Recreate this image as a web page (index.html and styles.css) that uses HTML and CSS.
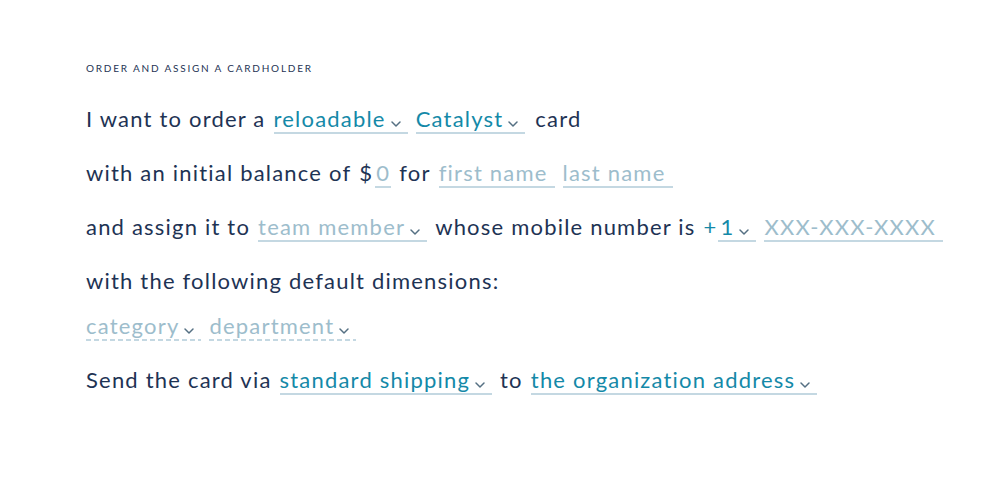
FILE: index.html
```html
<!DOCTYPE html>
<html lang="en">
<head>
<meta charset="utf-8">
<title>Order and assign a cardholder</title>
<link rel="stylesheet" href="styles.css">
</head>
<body>
<main class="form">
  <h1 class="title">ORDER AND ASSIGN A CARDHOLDER</h1>

  <div class="row">
    <span>I want to order a</span>
    <span class="field value">reloadable<svg class="chev" viewBox="0 0 10 6"><path d="M1 1l4 4 4-4"/></svg></span>
    <span class="field value">Catalyst<svg class="chev" viewBox="0 0 10 6"><path d="M1 1l4 4 4-4"/></svg></span>
    <span class="after">card</span>
  </div>

  <div class="row">
    <span>with an initial balance of</span>
    <span class="money"><span class="dollar">$</span><span class="field ph tight">0</span></span>
    <span>for</span>
    <span class="field ph">first name</span>
    <span class="field ph">last name</span>
  </div>

  <div class="row">
    <span>and assign it to</span>
    <span class="field ph">team member<svg class="chev" viewBox="0 0 10 6"><path d="M1 1l4 4 4-4"/></svg></span>
    <span>whose mobile number is</span>
    <span class="phone"><span class="plus">+</span><span class="field value code">1<svg class="chev" viewBox="0 0 10 6"><path d="M1 1l4 4 4-4"/></svg></span></span>
    <span class="field ph">XXX-XXX-XXXX</span>
  </div>

  <div class="row">
    <span>with the following default dimensions:</span>
  </div>

  <div class="row row-dims">
    <span class="field ph dashed">category<svg class="chev" viewBox="0 0 10 6"><path d="M1 1l4 4 4-4"/></svg></span>
    <span class="field ph dashed">department<svg class="chev" viewBox="0 0 10 6"><path d="M1 1l4 4 4-4"/></svg></span>
  </div>

  <div class="row">
    <span>Send the card via</span>
    <span class="field value">standard shipping<svg class="chev" viewBox="0 0 10 6"><path d="M1 1l4 4 4-4"/></svg></span>
    <span>to</span>
    <span class="field value">the organization address<svg class="chev" viewBox="0 0 10 6"><path d="M1 1l4 4 4-4"/></svg></span>
  </div>
</main>
</body>
</html>
```

FILE: styles.css
```css
* { box-sizing: border-box; }

html, body {
  margin: 0;
  padding: 0;
  background: #ffffff;
}

body {
  font-family: Lato, "Noto Sans", "Liberation Sans", sans-serif;
  color: #1e3354;
}

.form {
  padding: 60px 0 0 86px;
}

.title {
  margin: 0 0 30px;
  font-size: 10px;
  font-weight: 400;
  letter-spacing: 1.8px;
  line-height: 16px;
  color: #1e3354;
}

.row {
  display: flex;
  align-items: baseline;
  gap: 8px;
  font-size: 22px;
  letter-spacing: 1.2px;
  line-height: 26px;
  height: 54px;
}

.row-dims {
  height: 45px;
  margin-top: -9px;
  margin-bottom: 9px;
}

.field {
  display: inline-flex;
  align-items: baseline;
  line-height: 26px;
  border-bottom: 2px solid #c4d8e2;
  padding-right: 7px;
}

.field.value { color: #1489a8; }
.field.ph { color: #9dbdcc; }

.field.dashed {
  border-bottom: none;
  padding-bottom: 2px;
  background-image: linear-gradient(to right, #c4d8e2 5px, transparent 5px);
  background-size: 8px 2px;
  background-repeat: repeat-x;
  background-position: left bottom;
}

.chev {
  width: 10px;
  height: 6px;
  margin-left: 5px;
  margin-bottom: 2px;
  fill: none;
  stroke: #557083;
  stroke-width: 1.5;
  stroke-linecap: round;
  stroke-linejoin: round;
  overflow: visible;
}

.after { margin-left: 2px; }

.money, .phone {
  display: inline-flex;
  align-items: baseline;
}

.dollar { margin-right: 2px; }
.field.tight { padding: 0 1px; }

.plus { color: #1489a8; }
.field.code { padding-left: 3px; }
```
